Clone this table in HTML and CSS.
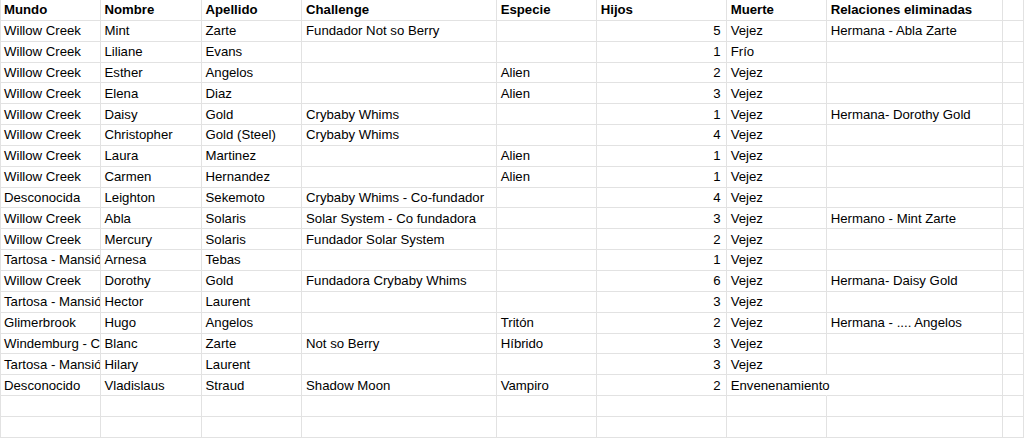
FILE: index.html
```html
<!DOCTYPE html>
<html lang="es">
<head>
<meta charset="utf-8">
<title>Sims</title>
<link rel="stylesheet" href="styles.css">
</head>
<body>
<div class="sheet">
  <div class="c h first">Mundo</div><div class="c h">Nombre</div><div class="c h">Apellido</div><div class="c h">Challenge</div><div class="c h">Especie</div><div class="c h">Hijos</div><div class="c h">Muerte</div><div class="c h">Relaciones eliminadas</div><div class="c"></div>

  <div class="c first">Willow Creek</div><div class="c">Mint</div><div class="c">Zarte</div><div class="c">Fundador Not so Berry</div><div class="c"></div><div class="c n">5</div><div class="c">Vejez</div><div class="c">Hermana - Abla Zarte</div><div class="c"></div>

  <div class="c first">Willow Creek</div><div class="c">Liliane</div><div class="c">Evans</div><div class="c"></div><div class="c"></div><div class="c n">1</div><div class="c">Frío</div><div class="c"></div><div class="c"></div>

  <div class="c first">Willow Creek</div><div class="c">Esther</div><div class="c">Angelos</div><div class="c"></div><div class="c">Alien</div><div class="c n">2</div><div class="c">Vejez</div><div class="c"></div><div class="c"></div>

  <div class="c first">Willow Creek</div><div class="c">Elena</div><div class="c">Diaz</div><div class="c"></div><div class="c">Alien</div><div class="c n">3</div><div class="c">Vejez</div><div class="c"></div><div class="c"></div>

  <div class="c first">Willow Creek</div><div class="c">Daisy</div><div class="c">Gold</div><div class="c">Crybaby Whims</div><div class="c"></div><div class="c n">1</div><div class="c">Vejez</div><div class="c">Hermana- Dorothy Gold</div><div class="c"></div>

  <div class="c first">Willow Creek</div><div class="c">Christopher</div><div class="c">Gold (Steel)</div><div class="c">Crybaby Whims</div><div class="c"></div><div class="c n">4</div><div class="c">Vejez</div><div class="c"></div><div class="c"></div>

  <div class="c first">Willow Creek</div><div class="c">Laura</div><div class="c">Martinez</div><div class="c"></div><div class="c">Alien</div><div class="c n">1</div><div class="c">Vejez</div><div class="c"></div><div class="c"></div>

  <div class="c first">Willow Creek</div><div class="c">Carmen</div><div class="c">Hernandez</div><div class="c"></div><div class="c">Alien</div><div class="c n">1</div><div class="c">Vejez</div><div class="c"></div><div class="c"></div>

  <div class="c first">Desconocida</div><div class="c">Leighton</div><div class="c">Sekemoto</div><div class="c">Crybaby Whims - Co-fundador</div><div class="c"></div><div class="c n">4</div><div class="c">Vejez</div><div class="c"></div><div class="c"></div>

  <div class="c first">Willow Creek</div><div class="c">Abla</div><div class="c">Solaris</div><div class="c">Solar System - Co fundadora</div><div class="c"></div><div class="c n">3</div><div class="c">Vejez</div><div class="c">Hermano - Mint Zarte</div><div class="c"></div>

  <div class="c first">Willow Creek</div><div class="c">Mercury</div><div class="c">Solaris</div><div class="c">Fundador Solar System</div><div class="c"></div><div class="c n">2</div><div class="c">Vejez</div><div class="c"></div><div class="c"></div>

  <div class="c first">Tartosa - Mansión</div><div class="c">Arnesa</div><div class="c">Tebas</div><div class="c"></div><div class="c"></div><div class="c n">1</div><div class="c">Vejez</div><div class="c"></div><div class="c"></div>

  <div class="c first">Willow Creek</div><div class="c">Dorothy</div><div class="c">Gold</div><div class="c">Fundadora Crybaby Whims</div><div class="c"></div><div class="c n">6</div><div class="c">Vejez</div><div class="c">Hermana- Daisy Gold</div><div class="c"></div>

  <div class="c first">Tartosa - Mansión</div><div class="c">Hector</div><div class="c">Laurent</div><div class="c"></div><div class="c"></div><div class="c n">3</div><div class="c">Vejez</div><div class="c"></div><div class="c"></div>

  <div class="c first">Glimerbrook</div><div class="c">Hugo</div><div class="c">Angelos</div><div class="c"></div><div class="c">Tritón</div><div class="c n">2</div><div class="c">Vejez</div><div class="c">Hermana - .... Angelos</div><div class="c"></div>

  <div class="c first">Windemburg - Castillo</div><div class="c">Blanc</div><div class="c">Zarte</div><div class="c">Not so Berry</div><div class="c">Híbrido</div><div class="c n">3</div><div class="c">Vejez</div><div class="c"></div><div class="c"></div>

  <div class="c first">Tartosa - Mansión</div><div class="c">Hilary</div><div class="c">Laurent</div><div class="c"></div><div class="c"></div><div class="c n">3</div><div class="c">Vejez</div><div class="c"></div><div class="c"></div>

  <div class="c first">Desconocido</div><div class="c">Vladislaus</div><div class="c">Straud</div><div class="c">Shadow Moon</div><div class="c">Vampiro</div><div class="c n">2</div><div class="c spill">Envenenamiento</div><div class="c"></div><div class="c"></div>

  <div class="c first"></div><div class="c"></div><div class="c"></div><div class="c"></div><div class="c"></div><div class="c"></div><div class="c"></div><div class="c"></div><div class="c"></div>

  <div class="c first"></div><div class="c"></div><div class="c"></div><div class="c"></div><div class="c"></div><div class="c"></div><div class="c"></div><div class="c"></div><div class="c"></div>
</div>
</body>
</html>
```

FILE: styles.css
```css
html, body {
  margin: 0;
  padding: 0;
  background: #fff;
  overflow: hidden;
}

.sheet {
  display: grid;
  grid-template-columns: 100.5px 101px 100.5px 194.7px 100px 130px 100px 176.3px 21px;
  grid-auto-rows: 20.85px;
  font-family: "Liberation Sans", Arial, sans-serif;
  font-size: 13.2px;
  color: #000;
  width: 1024px;
}

.c {
  box-sizing: border-box;
  border-right: 1px solid #e2e2e2;
  border-bottom: 1px solid #e2e2e2;
  padding: 0 4px;
  display: flex;
  align-items: center;
  white-space: nowrap;
  overflow: hidden;
  line-height: 1;
}

.first {
  border-left: 1px solid #e2e2e2;
  padding-left: 3px;
}

.h {
  font-weight: bold;
}

.n {
  justify-content: flex-end;
  padding-right: 5px;
}

.spill {
  overflow: visible;
  border-right-color: transparent;
}
```
